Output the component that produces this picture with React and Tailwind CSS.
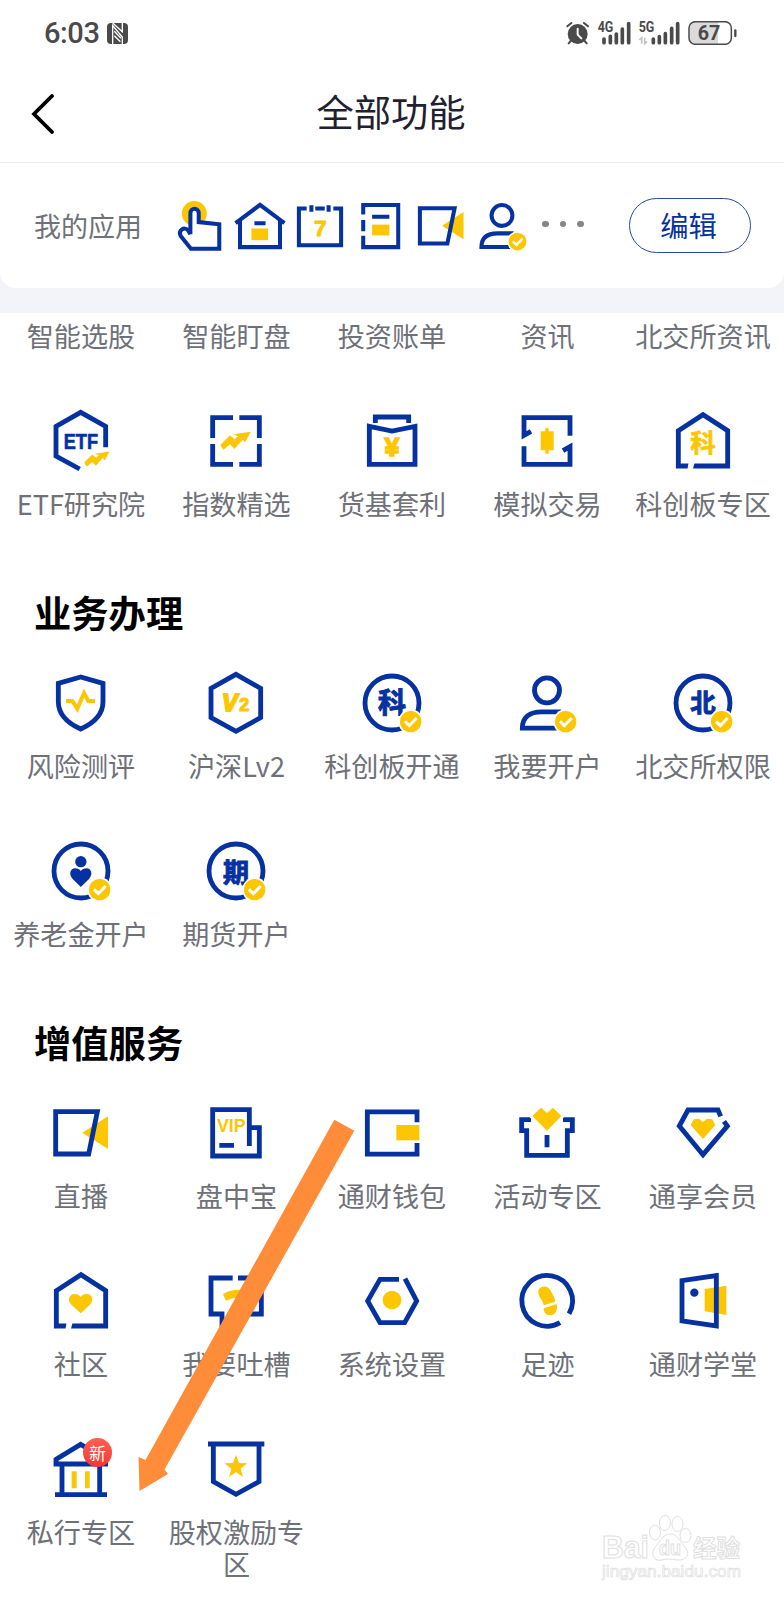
import React from 'react';

const BLUE = '#0532a0';
const GOLD = '#fdc603';
const CJK = '"Noto Sans CJK SC", sans-serif';
const LATIN = '"Liberation Sans", sans-serif';

// Every icon is drawn on a 216 unit grid
const Icon = ({ size = 72, children }) => (
  <svg
    width={size}
    height={size}
    viewBox="0 0 216 216"
    fill="none"
    stroke={BLUE}
    strokeWidth="14.500"
    className="block shrink-0"
  >
    {children}
  </svg>
);

const Line = ({ d }) => <path d={d} />;
const Gold = ({ d, transform }) => <path d={d} transform={transform} fill={GOLD} stroke="none" />;

const Glyph = ({ x = 108, y, size, color = BLUE, font = CJK, anchor = 'middle', bold = 0, children, ...rest }) => (
  <text
    x={x}
    y={y}
    fontSize={size}
    fontWeight="700"
    fontFamily={font}
    fill={color}
    stroke={bold ? color : 'none'}
    strokeWidth={bold}
    textAnchor={anchor}
    {...rest}
  >
    {children}
  </text>
);

const CheckBadge = () => (
  <g>
    <circle cx="164" cy="164" r="37" fill="#fff" stroke="none" />
    <circle cx="164" cy="164" r="32" fill={GOLD} stroke="none" />
    <path d="M147 163L160 176L182 153" stroke="#fff" strokeWidth="9" />
  </g>
);

const ARROW = 'M61 120L90 91L104 103L114 94L100 88L152 80L136 112L128 104L103 132L90 118L70 135Z';

// House outline with a slanted cut in its floor
const HouseFrame = () => (
  <g>
    <path d="M34 77L108 29L182 77V183H34Z" />
    <path d="M61 195L65 171H83L77 195Z" fill="#fff" stroke="none" />
  </g>
);

/* Shortcut icons */
const TapIcon = ({ size }) => (
  <Icon size={size}>
    <circle cx="91" cy="63" r="45" fill={GOLD} stroke="none" />
    <path
      d="M77 138V62C77 41 107 41 107 62V94L181 102V190H79L42 144C32 124 56 108 69 124L77 138"
      fill="#fff"
    />
  </Icon>
);

const HomeIcon = ({ size }) => (
  <Icon size={size}>
    <Line d="M20 98L108 32L196 98M36 88V184H180V88M88 98H128" />
    <Gold d="M77 117H137V159H77Z" />
  </Icon>
);

const CalendarIcon = ({ size }) => (
  <Icon size={size}>
    <Line d="M60 45H32V177H184V45H156M91 45H125M77 33V57M139 33V57" />
    <Glyph x="109" y="145" size="82" color={GOLD} font={LATIN} bold={3}>7</Glyph>
  </Icon>
);

const NoteIcon = ({ size }) => (
  <Icon size={size}>
    <Line d="M44 67V32H170V184H44V143M44 86V127M76 75H138" />
    <Gold d="M76 103H138V142H76Z" />
  </Icon>
);

const LiveIcon = ({ size }) => (
  <Icon size={size}>
    <Gold d="M112 107L189 58V156Z" />
    <Line d="M32 44H157L131 171H32Z" />
  </Icon>
);

const PersonIcon = ({ size }) => (
  <Icon size={size}>
    <circle cx="108" cy="70" r="37.500" />
    <Line d="M150 134.500H92C56 134.500 34 150 34 183.500H142" />
    <CheckBadge />
  </Icon>
);

/* Feature icons */
const EtfIcon = () => (
  <Icon>
    <Line d="M182 127V64L107 22L33 64V153L104 192" />
    <Glyph x="56" y="131" size="66" font={LATIN} anchor="start" bold={2} textLength="103" lengthAdjust="spacingAndGlyphs">
      ETF
    </Glyph>
    <Gold d={ARROW} transform="translate(67 73) scale(.83)" />
  </Icon>
);

const IndexIcon = () => (
  <Icon>
    <Line d="M38 99V38H99M118 38H178V99M178 117V178H118M99 178H38V117" />
    <Gold d={ARROW} />
  </Icon>
);

const FundIcon = () => (
  <Icon>
    <Line d="M40 64L108 78L177 64V178H40ZM58 54V36H158V54" />
    <Glyph y="152" size="80" color={GOLD} font={LATIN} bold={5}>¥</Glyph>
  </Icon>
);

const TradeIcon = () => (
  <Icon>
    <Line d="M177 92V38H39V91L60 79M39 124V178H177V125L156 137" />
    <Gold d="M89 79H103V69H113V79H128V136H113V146H103V136H89Z" />
  </Icon>
);

const StarBoardIcon = () => (
  <Icon>
    <HouseFrame />
    <Glyph y="141" size="76" color={GOLD} bold={2}>科</Glyph>
  </Icon>
);

const ShieldIcon = () => (
  <Icon>
    <Line d="M107 30L40 49V104C40 146 72 170 107 186C142 170 174 146 174 104V49Z" />
    <path d="M63 102H82L97 125L117 78L130 102H150" stroke={GOLD} strokeWidth="12" />
  </Icon>
);

const Lv2Icon = () => (
  <Icon>
    <Line d="M108 22L182 64V152L108 193L33 152V64Z" />
    <Glyph x="66" y="132" size="70" color={GOLD} font={LATIN} anchor="start" fontStyle="italic" bold={6}>V</Glyph>
    <Glyph x="118" y="132" size="54" color={GOLD} font={LATIN} anchor="start" bold={3}>2</Glyph>
  </Icon>
);

const CharBadgeIcon = ({ char, size, y }) => (
  <Icon>
    <circle cx="108" cy="108" r="81" />
    <Glyph y={y} size={size} bold={3}>{char}</Glyph>
    <CheckBadge />
  </Icon>
);

const PensionIcon = () => (
  <Icon>
    <circle cx="108" cy="108" r="81" />
    <circle cx="107.500" cy="80" r="17" fill={BLUE} stroke="none" />
    <path
      d="M107.500 156L83 132C70 118 76 100 90 100C98 100 104 103 107.500 108C111 103 117 100 125 100C139 100 145 118 132 132Z"
      fill={BLUE}
      stroke="none"
    />
    <CheckBadge />
  </Icon>
);

const VipIcon = () => (
  <Icon>
    <Line d="M148 147V38H38V177H178V92H148M58 145H102" />
    <Glyph x="51" y="104" size="54" color={GOLD} font={LATIN} anchor="start" textLength="86" lengthAdjust="spacingAndGlyphs">
      VIP
    </Glyph>
  </Icon>
);

const WalletIcon = () => (
  <Icon>
    <Line d="M183 76V44.500H34V171.500H183V138" />
    <Gold d="M121 84H190V130H121Z" />
  </Icon>
);

const GiftIcon = () => (
  <Icon>
    <Line d="M60 68H32V101H47V175H169V101H184V68H156M108 114V151" />
    <path d="M64 57L90 32L108 48L126 32L151 57L108 101Z" fill={GOLD} stroke="#fff" strokeWidth="16" paintOrder="stroke" />
  </Icon>
);

const DiamondIcon = () => (
  <Icon>
    <Line d="M161 58L153 39H63L37 87L108 173L181 87L171 73" />
    <Gold d="M71 84L80 67L96 65L108 75L120 65L136 67L145 84L108 126Z" />
  </Icon>
);

const CommunityIcon = () => (
  <Icon>
    <HouseFrame />
    <Gold d="M107 145L79 119C64 102 75 87 89 87C97 87 103 90 107 96C111 90 117 87 125 87C139 87 150 102 135 119Z" />
  </Icon>
);

const FeedbackIcon = () => (
  <Icon>
    <Line d="M98 39H33V147H66V178L112 147H184V39H114" />
    <Gold d="M69 88C84 76 112 70 144 80L138 100C116 94 96 98 78 107Z" />
  </Icon>
);

const SettingsIcon = () => (
  <Icon>
    <Line d="M129 43H72L35 108L72 173H146L182 108L147 41" />
    <circle cx="108" cy="105" r="28" fill={GOLD} stroke="none" />
  </Icon>
);

const FootprintIcon = () => (
  <Icon>
    <Line d="M174 146A76 76 0 1 0 147 173" />
    <Gold d="M82 84C80 64 107 58 117 74C124 86 132 98 133 110L98 121C96 106 84 98 82 84Z" />
    <Gold d="M98 130L137 117C140 132 136 150 118 151C104 151 98 142 98 130Z" />
  </Icon>
);

const SchoolIcon = () => (
  <Icon>
    <Gold d="M113 72L178 62V150L113 139Z" />
    <Line d="M45 47L148 32V183L45 168Z" />
    <circle cx="82" cy="83" r="12.500" fill={BLUE} stroke="none" />
  </Icon>
);

const BankIcon = () => (
  <Icon>
    <Line d="M189 93H33V79L107 34L130 48M51 93V184M164 93V184M30 185H186" />
    <Gold d="M80 115H95V166H80ZM120 115H134V166H120Z" />
  </Icon>
);

const PennantIcon = () => (
  <Icon>
    <Line d="M24 33H193M40 33V146L108 184L177 146V33" />
    <Gold d="M108 65L117 90L142 91L122 107L129 132L108 117L87 132L94 107L74 91L99 90Z" />
  </Icon>
);

const shortcuts = [TapIcon, HomeIcon, CalendarIcon, NoteIcon, LiveIcon, PersonIcon];

const clippedLabels = ['智能选股', '智能盯盘', '投资账单', '资讯', '北交所资讯'];

const toolItems = [
  { label: 'ETF研究院', icon: <EtfIcon /> },
  { label: '指数精选', icon: <IndexIcon /> },
  { label: '货基套利', icon: <FundIcon /> },
  { label: '模拟交易', icon: <TradeIcon /> },
  { label: '科创板专区', icon: <StarBoardIcon /> },
];

const businessItems = [
  { label: '风险测评', icon: <ShieldIcon /> },
  { label: '沪深Lv2', icon: <Lv2Icon /> },
  { label: '科创板开通', icon: <CharBadgeIcon char="科" size={84} y={137} /> },
  { label: '我要开户', icon: <PersonIcon /> },
  { label: '北交所权限', icon: <CharBadgeIcon char="北" size={76} y={136} /> },
  { label: '养老金开户', icon: <PensionIcon /> },
  { label: '期货开户', icon: <CharBadgeIcon char="期" size={78} y={140} /> },
];

const serviceItems = [
  { label: '直播', icon: <LiveIcon /> },
  { label: '盘中宝', icon: <VipIcon /> },
  { label: '通财钱包', icon: <WalletIcon /> },
  { label: '活动专区', icon: <GiftIcon /> },
  { label: '通享会员', icon: <DiamondIcon /> },
  { label: '社区', icon: <CommunityIcon /> },
  { label: '我要吐槽', icon: <FeedbackIcon /> },
  { label: '系统设置', icon: <SettingsIcon /> },
  { label: '足迹', icon: <FootprintIcon /> },
  { label: '通财学堂', icon: <SchoolIcon /> },
  { label: '私行专区', icon: <BankIcon />, badge: '新' },
  { label: '股权激励专区', icon: <PennantIcon /> },
];

const Label = ({ children }) => (
  <span className="block text-center text-[27.1px] leading-8 text-[#6f7178]">{children}</span>
);

const FeatureGrid = ({ items }) => (
  <div className="ml-[3.2px] grid w-[777.6px] grid-cols-5 gap-y-[53px]">
    {items.map(({ label, icon, badge }) => (
      <div key={label} className="flex flex-col items-center gap-[11px]">
        <div className="relative">
          {icon}
          {badge && (
            <span className="absolute left-[38px] top-[5px] flex size-[29px] items-center justify-center rounded-full bg-gradient-to-b from-[#ff5f52] to-[#f43530] text-[17px] leading-none text-white">
              {badge}
            </span>
          )}
        </div>
        <Label>{label}</Label>
      </div>
    ))}
  </div>
);

const SectionTitle = ({ children }) => (
  <h2 className="mb-[31px] mt-[68px] pl-[34px] text-[37.3px] font-bold leading-[48px] text-black">{children}</h2>
);

const StatusBar = () => (
  <div className="flex h-[62px] items-center justify-between pl-[44px] pr-[47px] pt-1 text-[#4a4a4a]">
    <div className="flex items-center gap-[7px]">
      <span className="font-['Roboto'] text-[29px] font-medium leading-6 tracking-[-0.4px]">6:03</span>
      <svg width="21" height="21" viewBox="0 0 63 63" className="block">
        <rect width="63" height="63" rx="12" fill="currentColor" />
        <path d="M17 63V8L46 42V63M17 0L46 26V0" fill="none" stroke="#fff" strokeWidth="4" />
        <path d="M22 25L42 46M22 38L40 56" stroke="#fff" strokeWidth="4" />
      </svg>
    </div>

    <div className="flex items-center">
      {/* Alarm */}
      <svg width="24" height="24" viewBox="0 0 72 72" className="mr-[7px] block">
        <circle cx="35" cy="39" r="30" fill="currentColor" />
        <g stroke="currentColor" strokeWidth="6" strokeLinecap="round" fill="none">
          <path d="M4 16L16 6M66 16L54 6M14 60L8 67M56 60L62 67" />
        </g>
        <path d="M35 23V41L46 52" fill="none" stroke="#fff" strokeWidth="6" strokeLinecap="round" />
      </svg>

      {/* 4G */}
      <svg width="34" height="24" viewBox="0 0 102 72" className="mr-[7px] block overflow-visible">
        <text x="2" y="34" fontSize="43" fontWeight="700" fontFamily="Roboto, sans-serif" fill="currentColor" textLength="47" lengthAdjust="spacingAndGlyphs">
          4G
        </text>
        <path d="M21 54V65M40 46V65M58 39V65M76 24V65M95 8V65" stroke="currentColor" strokeWidth="11" strokeLinecap="round" />
      </svg>

      {/* 5G */}
      <svg width="42" height="24" viewBox="0 0 126 72" className="mr-2 block overflow-visible">
        <text x="2" y="34" fontSize="43" fontWeight="700" fontFamily="Roboto, sans-serif" fill="currentColor" textLength="47" lengthAdjust="spacingAndGlyphs">
          5G
        </text>
        <path d="M4 57L11 50V68M20 50V68L27 61" stroke="#c4c4c4" strokeWidth="5" fill="none" />
        <path d="M46 54V65M64 47V65M82 38V65M101 22V65M119 8V65" stroke="currentColor" strokeWidth="11" strokeLinecap="round" />
      </svg>

      {/* Battery */}
      <svg width="49" height="24" viewBox="0 0 147 72" className="block">
        <path d="M20 4H90V68H20Q4 68 4 52V20Q4 4 20 4Z" fill="#dadada" />
        <rect x="3" y="2" width="127" height="68" rx="19" fill="none" stroke="currentColor" strokeWidth="4.500" />
        <path d="M142 28V45" stroke="currentColor" strokeWidth="7" strokeLinecap="round" />
        <text x="29" y="58" fontSize="61" fontWeight="700" fontFamily="Roboto, sans-serif" fill="currentColor" textLength="68" lengthAdjust="spacingAndGlyphs">
          67
        </text>
      </svg>
    </div>
  </div>
);

const Header = () => (
  <header className="grid h-[101px] grid-cols-3 items-center border-b border-[#ececee]">
    <svg width="24" height="40" viewBox="0 0 24 40" fill="none" className="ml-[31px] mt-[3px] block">
      <path d="M21 2L3 20L21 38" stroke="#000" strokeWidth="3.800" strokeLinecap="round" />
    </svg>
    <h1 className="mb-[3px] mr-[2px] text-center text-[37.3px] leading-[48px] text-[#1f2130]">全部功能</h1>
  </header>
);

const MyApps = () => (
  <div className="bg-[#f3f4f9]">
    <div className="flex h-[125px] items-center rounded-b-[16px] bg-white pl-[34px] pr-[33px]">
      <span className="w-[135px] text-[27px] leading-8 text-[#6f7178]">我的应用</span>
      <div className="flex gap-[0.6px]">
        {shortcuts.map((ShortcutIcon, i) => (
          <ShortcutIcon key={i} size={60} />
        ))}
      </div>
      <div className="mb-[3px] ml-[10px] flex gap-[11px]">
        <i className="size-[6.600px] rounded-full bg-[#868686]" />
        <i className="size-[6.600px] rounded-full bg-[#868686]" />
        <i className="size-[6.600px] rounded-full bg-[#868686]" />
      </div>
      <button className="ml-auto h-[55px] w-[122px] rounded-full border border-[#274a9f] pr-[3px] text-[28.3px] leading-none text-[#0532a0]">
        编辑
      </button>
    </div>
    <div className="h-[25px]" />
  </div>
);

const PointerArrow = () => (
  <svg width="784" height="1600" viewBox="0 0 784 1600" className="pointer-events-none absolute left-0 top-0">
    <path
      d="M334.300 1119.700L354.300 1130.700L164.500 1469.500L168 1474L139.500 1491L138.500 1457L145.500 1460Z"
      fill="#ff8c39"
    />
  </svg>
);

const Watermark = () => (
  <svg width="150" height="74" viewBox="0 0 150 74" className="pointer-events-none absolute bottom-[14px] right-[38px]">
    <g fill="#fff" stroke="#e0e0e0" strokeWidth="1">
      <text x="6" y="46" fontSize="31" fontWeight="700" fontFamily={LATIN} textLength="47" lengthAdjust="spacingAndGlyphs">Bai</text>
      <ellipse cx="59" cy="20.500" rx="5.500" ry="7.500" />
      <ellipse cx="69" cy="11" rx="5.500" ry="7.500" />
      <ellipse cx="81.500" cy="12" rx="5.500" ry="7.500" />
      <ellipse cx="89.500" cy="23.500" rx="5.500" ry="7" />
      <path d="M74 22C82 22 84 30 88 34C95 41 91 48 83 48C78 48 71 46 66 48C58 50 54 42 59 35C64 31 66 22 74 22Z" />
      <text x="63" y="43" fontSize="20" fontWeight="700" fontFamily={LATIN} textLength="22" lengthAdjust="spacingAndGlyphs">du</text>
      <text x="97" y="45" fontSize="23.500" fontWeight="700" fontFamily={CJK}>经验</text>
      <text x="6" y="65" fontSize="16.500" fontFamily={LATIN} strokeWidth="0.700" textLength="139" lengthAdjust="spacingAndGlyphs">jingyan.baidu.com</text>
    </g>
  </svg>
);

const App = () => {
  return (
    <div className="relative h-[1600px] w-[784px] overflow-hidden bg-white font-['Noto_Sans_CJK_SC',sans-serif]">
      <StatusBar />
      <Header />
      <MyApps />

      <main className="pt-[7px]">
        <div className="mb-[53px] ml-[3.2px] grid w-[777.6px] grid-cols-5">
          {clippedLabels.map((label) => (
            <Label key={label}>{label}</Label>
          ))}
        </div>
        <FeatureGrid items={toolItems} />

        <SectionTitle>业务办理</SectionTitle>
        <FeatureGrid items={businessItems} />

        <SectionTitle>增值服务</SectionTitle>
        <FeatureGrid items={serviceItems} />
      </main>

      <PointerArrow />
      <Watermark />
    </div>
  );
};

export default App;
